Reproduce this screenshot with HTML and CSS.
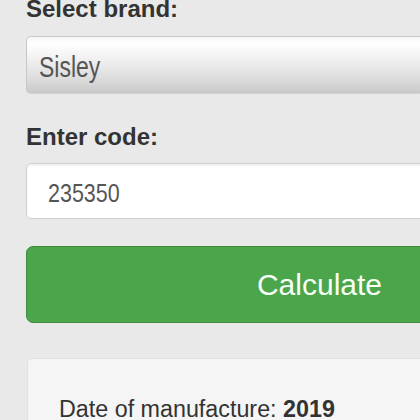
FILE: index.html
```html
<!DOCTYPE html>
<html>
<head>
<meta charset="utf-8">
<link rel="stylesheet" href="styles.css">
</head>
<body>
<form class="form">
  <label class="field-label first">Select brand:</label>
  <div class="select"><span class="value">Sisley</span></div>
  <label class="field-label">Enter code:</label>
  <div class="input"><span class="value digits">235350</span></div>
  <button type="button" class="btn">Calculate</button>
  <div class="result">Date of manufacture: <b>2019</b></div>
</form>
</body>
</html>
```

FILE: styles.css
```css
html, body {
  margin: 0;
  padding: 0;
  overflow: hidden;
  background: #e9e9e9;
}
body {
  font-family: "Liberation Sans", Arial, sans-serif;
  color: #333;
}
.form {
  width: 587px;
  margin-left: 26px;
  display: flex;
  flex-direction: column;
}
.field-label {
  display: block;
  font-weight: bold;
  font-size: 24px;
  line-height: 22px;
  color: #333;
  margin: 32px 0 15px;
}
.field-label.first {
  margin-top: -2px;
  margin-bottom: 16px;
}
.select {
  box-sizing: border-box;
  height: 58px;
  border: 1px solid #c6c6c6;
  border-bottom-color: #d2d2d2;
  border-radius: 5px;
  background: linear-gradient(#f6f6f6 0%, #ffffff 12%, #f0f0f0 40%, #dcdcdc 75%, #c9c9c9 100%);
  padding: 19px 12px 0;
}
.input {
  box-sizing: border-box;
  height: 56px;
  border: 1px solid #cfcfcf;
  border-radius: 5px;
  background: #fff;
  box-shadow: inset 0 2px 2px rgba(0,0,0,0.06);
  padding: 18px 21px 0;
}
.value {
  display: inline-block;
  font-size: 23px;
  line-height: 26px;
  color: #555;
  transform: scaleY(1.28);
  transform-origin: 0 80%;
}
.value.digits {
  font-size: 21.5px;
  transform: scaleY(1.24);
}
.btn {
  margin-top: 27px;
  box-sizing: border-box;
  height: 77px;
  border: 1px solid #3f8c3e;
  border-radius: 7px;
  background: #4ba54a;
  color: #f7fff6;
  font-family: "Liberation Sans", Arial, sans-serif;
  font-size: 30px;
  padding: 0;
}
.result {
  margin-top: 35px;
  margin-left: 1px;
  border: 1px solid #e2e2e2;
  border-radius: 4px;
  background: #f5f5f5;
  padding: 37px 31px 20px;
  font-size: 23.3px;
  line-height: 26px;
  color: #333;
}
.result b {
  color: #333;
}
```
